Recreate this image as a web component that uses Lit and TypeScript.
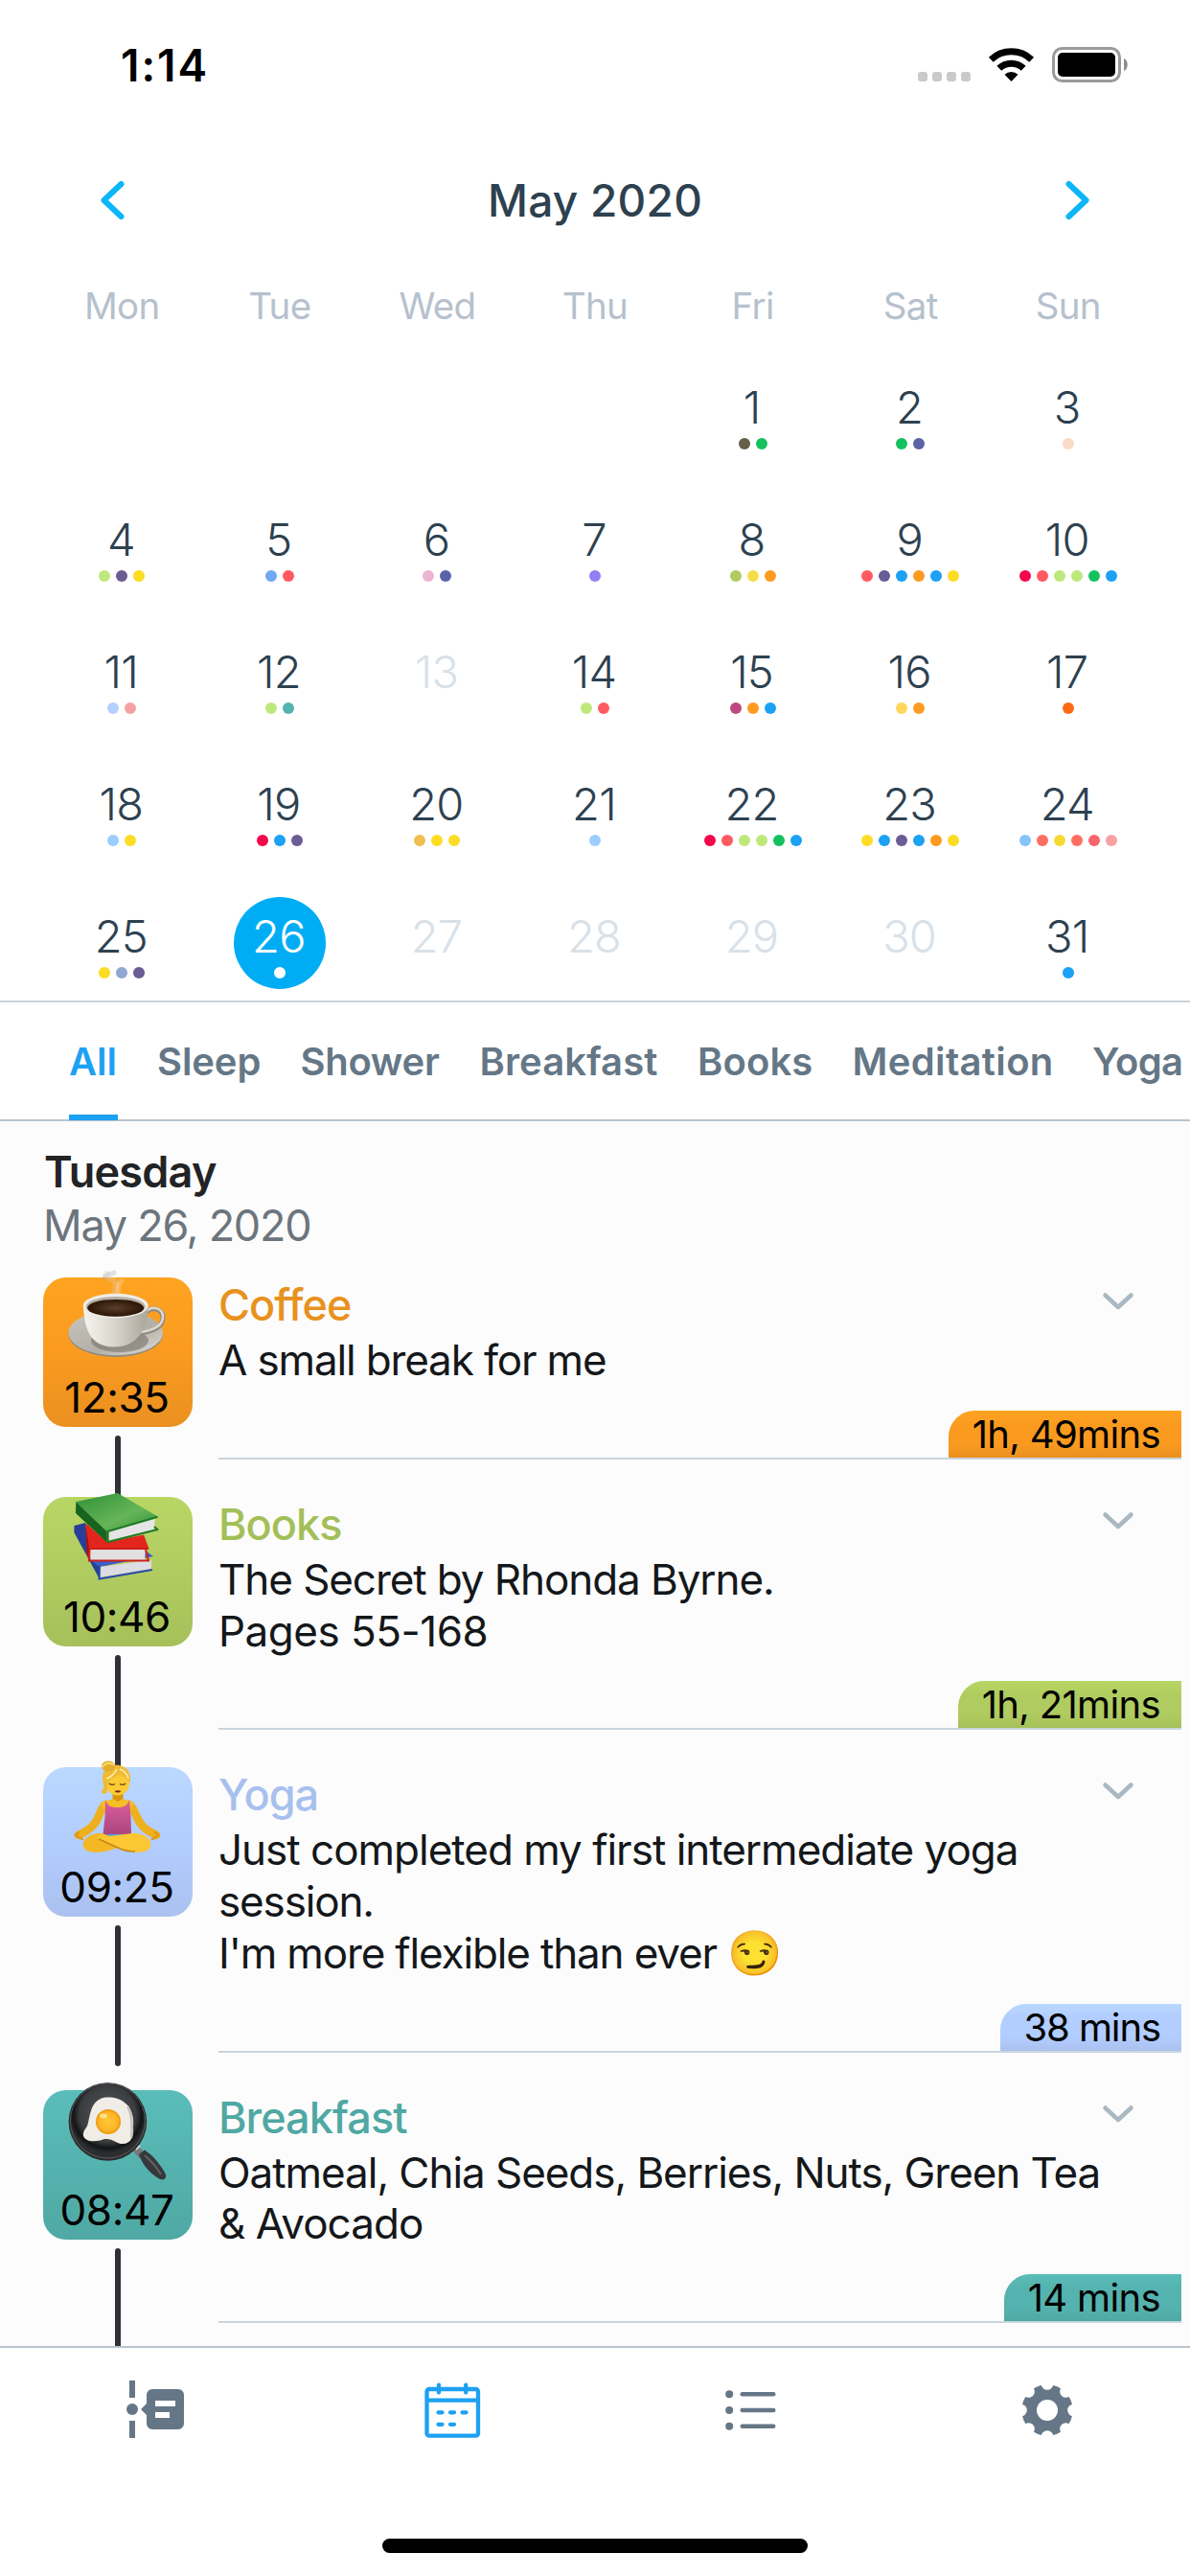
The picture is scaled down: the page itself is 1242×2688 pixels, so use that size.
import { LitElement, html, svg, css } from "lit";
import { customElement } from "lit/decorators.js";
import { classMap } from "lit/directives/class-map.js";
import { styleMap } from "lit/directives/style-map.js";

const C = {
  green: "#14c15f", lime: "#bfe87c", olive: "#65604a", indigo: "#5a62a8", purple: "#6a5c94",
  yellow: "#fcdc24", blue: "#1ca1f3", red: "#ff5a62", crimson: "#f6064a", orange: "#fc9b20",
  sky: "#9bceff", coral: "#ff6f61", rose: "#f8a1a4",
};

interface Day { n: number; dots: string[]; off?: boolean; on?: boolean }

const days: Day[] = [
  { n: 1, dots: [C.olive, C.green] },
  { n: 2, dots: [C.green, C.indigo] },
  { n: 3, dots: ["#f8dac6"] },
  { n: 4, dots: [C.lime, C.purple, C.yellow] },
  { n: 5, dots: ["#70a8f6", C.red] },
  { n: 6, dots: ["#ecb4d0", C.indigo] },
  { n: 7, dots: ["#9080f4"] },
  { n: 8, dots: ["#b0cb5e", "#f4df4b", C.orange] },
  { n: 9, dots: [C.red, C.purple, C.blue, C.orange, C.blue, C.yellow] },
  { n: 10, dots: [C.crimson, C.red, C.lime, C.lime, C.green, C.blue] },
  { n: 11, dots: ["#b3d0ff", C.rose] },
  { n: 12, dots: [C.lime, "#55b3ae"] },
  { n: 13, dots: [], off: true },
  { n: 14, dots: [C.lime, C.red] },
  { n: 15, dots: ["#c0487f", C.orange, C.blue] },
  { n: 16, dots: ["#ffd65c", C.orange] },
  { n: 17, dots: ["#fd6a17"] },
  { n: 18, dots: [C.sky, C.yellow] },
  { n: 19, dots: [C.crimson, C.blue, C.purple] },
  { n: 20, dots: ["#efc050", C.yellow, C.yellow] },
  { n: 21, dots: [C.sky] },
  { n: 22, dots: [C.crimson, C.red, C.lime, C.lime, C.green, C.blue] },
  { n: 23, dots: [C.yellow, C.blue, C.purple, C.blue, C.orange, C.yellow] },
  { n: 24, dots: ["#84c4fb", C.coral, "#f8da35", C.coral, "#f9656c", C.rose] },
  { n: 25, dots: [C.yellow, "#8fa8d4", C.purple] },
  { n: 26, dots: ["#ffffff"], on: true },
  { n: 27, dots: [], off: true },
  { n: 28, dots: [], off: true },
  { n: 29, dots: [], off: true },
  { n: 30, dots: [], off: true },
  { n: 31, dots: [C.blue] },
];

const tabs: [string, number][] = [
  ["All", 0], ["Sleep", -0.1], ["Shower", -0.3], ["Breakfast", 0.1],
  ["Books", 0.1], ["Meditation", 0.35], ["Yoga", -0.65],
];

const coffee = svg`
  <defs>
    <linearGradient id="cup" x1="0" x2="1"><stop offset="0" stop-color="#f6f4ef"/><stop offset=".45" stop-color="#dcd8d0"/><stop offset="1" stop-color="#aaa59a"/></linearGradient>
    <linearGradient id="saucer" x1="0" x2="1" y2="1"><stop offset="0" stop-color="#c9c6c0"/><stop offset=".6" stop-color="#b3afa6"/><stop offset="1" stop-color="#e2e0da"/></linearGradient>
    <radialGradient id="brew"><stop offset="0" stop-color="#5a3f2c"/><stop offset="1" stop-color="#2b1505"/></radialGradient>
  </defs>
  <g fill="none" stroke-linecap="round">
    <path d="M77 24C69 15 83 9 72 2C68 -1 63 -1 66 -4" stroke="#d9d4cb" stroke-width="6" opacity=".3"/>
    <path d="M77 24C82 15 74 10 82 4" stroke="#fff" stroke-width="5" opacity=".22"/>
    <path d="M64 0C68 -5 70 -3 74 -5" stroke="#999" stroke-width="5" opacity=".28"/>
  </g>
  <ellipse cx="75.700" cy="59.500" rx="49.300" ry="23.500" fill="#8f8b82"/>
  <ellipse cx="75.700" cy="57.800" rx="49.300" ry="23.500" fill="url(#saucer)"/>
  <ellipse cx="80" cy="66" rx="30" ry="12" fill="#75716a" opacity=".6"/>
  <path d="M108 36C114 30 125 33 125 42C125 51 115 56 102 58" fill="none" stroke="#8f8a81" stroke-width="5"/>
  <path d="M108 35C114 29 125 32 125 41C125 50 115 55 102 57" fill="none" stroke="#dedad2" stroke-width="2.600"/>
  <path d="M42 30C43 50 47 72 73 72.500C100 73 109 52 109.500 30Z" fill="url(#cup)"/>
  <ellipse cx="75.700" cy="29.500" rx="34" ry="12.800" fill="#efede8"/>
  <ellipse cx="75.700" cy="30.500" rx="31" ry="10.500" fill="#b7afa3"/>
  <ellipse cx="75.700" cy="31.800" rx="29.500" ry="8.900" fill="url(#brew)"/>`;

const books = svg`
  <defs><linearGradient id="leaf" x1="0" x2="1" y2="1"><stop offset="0" stop-color="#2f9136"/><stop offset=".6" stop-color="#66b558"/><stop offset="1" stop-color="#2f8f38"/></linearGradient></defs>
  <path d="M32.500 30L44 27L48 60L59 72L59 86L32.300 37Z" fill="#26409a"/>
  <path d="M48 65L108 57L115 62L59 73Z" fill="#3d5fc4"/>
  <path d="M60 73L113 65.500V75L60 84Z" fill="#dcdce2"/>
  <path d="M59 72L58.500 85.500L114 76" fill="none" stroke="#2b4bab" stroke-width="2"/>
  <path d="M44.300 27.300L66.700 47L105 39.500L110.500 54H48V66L45.500 60Z" fill="#e3261d"/>
  <path d="M44.300 27.300L48 53V66L45.500 58Z" fill="#9e1512"/>
  <path d="M48.500 54H107L106 66.300H49.500Z" fill="#e2dfe0"/>
  <path d="M110 54H48.500L48 66.500H110L107 55" fill="none" stroke="#cf1f19" stroke-width="2"/>
  <path d="M34.300 5L66.700 36V47.500L34 17Z" fill="#17631f"/>
  <path d="M34.300 5L77.700 -4L120 20.700L66.700 36Z" fill="url(#leaf)"/>
  <path d="M69 36L117 23L115.500 34L69 45.500Z" fill="#e6e5e6"/>
  <path d="M119.500 20.700L67.500 36V47L119.500 34L116 31" fill="none" stroke="#1f7a2a" stroke-width="2" stroke-linejoin="round"/>`;

const yoga = svg`
  <defs><linearGradient id="top" y2="1" x2="0"><stop offset="0" stop-color="#dc5f9d"/><stop offset="1" stop-color="#a8437e"/></linearGradient></defs>
  <g fill="none" stroke-linecap="round" stroke-linejoin="round">
    <path d="M65 39C57 46 60 57 46 66L37 71" stroke="#eeb01c" stroke-width="8.500"/>
    <path d="M90 39C98 46 96 57 109 66L118 71" stroke="#eeb01c" stroke-width="8.500"/>
    <path d="M41 75L33.500 71L37 68M114 75L120.500 71L117 68" stroke="#e09a16" stroke-width="2.500"/>
  </g>
  <path d="M72.500 24H83.500V37H72.500Z" fill="#d99513"/>
  <path d="M60 38C63 34 70 35 73 33L78 36L83 33C88 35 92 34 95 38L89 48H66Z" fill="#f5bd26"/>
  <path d="M65 34C67 40 70 42 77.500 42C85 42 88 40 90 34L91.500 52L92 70C82 73 72 73 62.500 70L64.500 52Z" fill="url(#top)"/>
  <path d="M67 70H89L85 76H71Z" fill="#49a7df"/>
  <path d="M62 69C50 68 40 75 42 83C45 91 62 90 75 85L100 74C97 69 92 69 88 71L77 76Z" fill="#f3b824"/>
  <path d="M93 69C105 68 114 75 112 83C109 91 92 90 79 85L56 74C60 69 65 70 69 72Z" fill="#fbc733"/>
  <path d="M58 75L79 84.500C84 87 90 88 96 88" fill="none" stroke="#c98612" stroke-width="1.500"/>
  <ellipse cx="77.700" cy="16.500" rx="12.300" ry="13" fill="#fbca35"/>
  <path d="M60.500 26C66 20 61 15 62 9C64 0 71 -3 79 -2C88 -1 93 7 90.500 17C89 11 83 9 78 7.500C75 12 69 12 68 16C67 20 68 25 66 27C65 28.500 62 28 60.500 26Z" fill="#eebb38"/>
  <path d="M66 12C73 10 75 5 77 2M80 2C85 4 88 8 89 12" fill="none" stroke="#fff0a0" stroke-width="1.500"/>
  <ellipse cx="68" cy="-1" rx="7" ry="5.500" fill="#e5ad2c"/>
  <path d="M62 0C65 -5 71 -5 74 -2" fill="none" stroke="#f9da70" stroke-width="2"/>
  <path d="M69 17Q72 19.500 75 17.500M80 17.500Q83 19.500 86 17" fill="none" stroke="#6b4510" stroke-width="1.400"/>
  <path d="M74.500 25.200Q78 23.300 81.500 25.200Q78 28 74.500 25.200Z" fill="#6e2a1a"/>`;

const pan = svg`
  <defs>
    <radialGradient id="iron" cy=".4"><stop offset="0" stop-color="#55585b"/><stop offset=".72" stop-color="#3a3c3f"/><stop offset=".88" stop-color="#131415"/><stop offset="1" stop-color="#2c2d2f"/></radialGradient>
    <radialGradient id="yolk"><stop offset="0" stop-color="#ffc73a"/><stop offset=".75" stop-color="#fdb524"/><stop offset="1" stop-color="#ee9408"/></radialGradient>
  </defs>
  <path d="M94 58L104 69" stroke="#77797c" stroke-width="8"/>
  <path d="M97 62L101 58" stroke="#d5d7d9" stroke-width="2"/>
  <path d="M100 67L106 62.500C116 69 124 80 128 88C129 93 125 95 120.500 92C113 88 104 79 100 67Z" fill="#37383b"/>
  <path d="M106 68C113 74 119 81 123 88" fill="none" stroke="#626467" stroke-width="1.800"/>
  <circle cx="67.400" cy="33" r="40.800" fill="url(#iron)"/>
  <circle cx="67.400" cy="32" r="39" fill="none" stroke="#5b5d60" stroke-width="1"/>
  <path d="M60 9C67 6 80 8 85 13C92 18 95 28 94 38C95 48 92 56 83 56C76 56 73 50 64 51C56 54 45 55 42 48C41 42 46 40 47 34C49 26 50 13 60 9Z" fill="#efede6"/>
  <path d="M88 17C94 27 93 40 92 50" fill="none" stroke="#c8c5bc" stroke-width="2.500"/>
  <circle cx="68" cy="33" r="13" fill="url(#yolk)"/>
  <ellipse cx="63" cy="27" rx="4" ry="2.500" fill="#ffe08a"/>`;

interface Line { text: string; track: number; emoji?: string }
interface Entry {
  kind: string; title: string; time: string; lines: Line[]; span: string;
  spanTrack: number; rail: number; art: unknown;
}

const entries: Entry[] = [
  {
    kind: "coffee", title: "Coffee", time: "12:35", span: "1h, 49mins", spanTrack: -0.65, rail: 70, art: coffee,
    lines: [{ text: "A small break for me", track: -1.15 }],
  },
  {
    kind: "books", title: "Books", time: "10:46", span: "1h, 21mins", spanTrack: -0.65, rail: 122, art: books,
    lines: [{ text: "The Secret by Rhonda Byrne.", track: -1.08 }, { text: "Pages 55-168", track: -0.5 }],
  },
  {
    kind: "yoga", title: "Yoga", time: "09:25", span: "38 mins", spanTrack: -1.1, rail: 147, art: yoga,
    lines: [
      { text: "Just completed my first intermediate yoga", track: -1.01 },
      { text: "session.", track: -1.15 },
      { text: "I'm more flexible than ever ", track: -1.15, emoji: "😏" },
    ],
  },
  {
    kind: "breakfast", title: "Breakfast", time: "08:47", span: "14 mins", spanTrack: -0.65, rail: 140, art: pan,
    lines: [{ text: "Oatmeal, Chia Seeds, Berries, Nuts, Green Tea", track: -1.05 }, { text: "& Avocado", track: -0.95 }],
  },
];

@customElement("app-root")
export class AppRoot extends LitElement {
  static styles = css`
    :host { display: block; width: 1242px; height: 2688px; overflow: hidden; background: #fff; font-family: Inter, "Noto Color Emoji", sans-serif; color: #14171a; }
    * { box-sizing: border-box; }
    svg { display: block; flex: none; overflow: visible; }
    .status { display: flex; justify-content: space-between; align-items: flex-start; height: 137px; padding: 0 62px 0 126px; }
    .clock { font-size: 46px; font-weight: 600; line-height: 137px; letter-spacing: 2px; color: #000; }
    .signals { margin-top: 40px; }
    .month { display: flex; justify-content: space-between; align-items: center; height: 144px; padding: 0 104px; }
    .month-name { font-size: 46px; font-weight: 460; letter-spacing: 0.250px; color: #2d4150; }
    .arrow { fill: none; stroke: #0cb6f8; stroke-width: 6; stroke-linecap: round; stroke-linejoin: round; }
    .week, .days { display: grid; grid-template-columns: repeat(7, 1fr); padding: 0 45px; }
    .week { font-size: 38.500px; line-height: 76px; letter-spacing: -0.700px; text-align: center; color: #b6c1cd; }
    .days { padding-top: 27px; padding-bottom: 12px; row-gap: 42px; justify-items: center; }
    .day { width: 96px; height: 96px; border-radius: 50%; color: #2d4150; }
    .first { grid-column-start: 5; }
    .num { height: 73px; line-height: 81px; padding-right: 2px; font-size: 47px; font-weight: 300; letter-spacing: -0.800px; text-align: center; }
    .off { color: #d9e1e8; }
    .on { background: #00adf5; color: #fff; }
    .dots { display: flex; justify-content: center; gap: 6px; }
    .dot { flex: none; width: 12px; height: 12px; border-radius: 50%; }
    .tabs { display: grid; grid-template-columns: 92px 149.500px 187px 227.500px 161.500px 250.500px 100px; justify-items: start; height: 126px; padding-left: 72px; border-top: 2px solid #c9d3dd; border-bottom: 2px solid #b9c4cf; }
    .tab { height: 123px; line-height: 123px; font-size: 40px; font-weight: 600; color: #657786; }
    .current { width: 51px; color: #1da1f2; border-bottom: 6px solid #1da1f2; }
    .feed { height: 1278px; padding: 24.600px 9px 0 45px; overflow: hidden; background: #fcfcfc; }
    .weekday { padding-left: 1px; font-size: 45px; line-height: 56px; font-weight: 600; letter-spacing: -0.750px; color: #222325; }
    .date { font-size: 45px; line-height: 56px; letter-spacing: -1.250px; color: #6c757d; margin-bottom: 26.400px; }
    .list { display: flex; flex-direction: column; gap: 39px; }
    .entry { display: flex; gap: 27px; flex: none; }
    .side { display: flex; flex-direction: column; align-items: center; gap: 9px; width: 156px; flex: none; }
    .tile { flex: none; width: 156px; height: 156px; border-radius: 24px; background: linear-gradient(var(--hi), var(--mid) 50%, var(--lo)); }
    .time { padding-right: 2px; font-size: 44px; line-height: 57px; letter-spacing: -0.400px; text-align: center; color: #000; }
    .rail { flex: none; width: 6px; border-radius: 3px; background: #2e3236; }
    .body { display: flex; flex-direction: column; flex: 1; border-bottom: 2px solid #c9d5e0; }
    .head { display: flex; justify-content: space-between; align-items: flex-start; height: 60px; padding-right: 50px; }
    .title { font-size: 45px; line-height: 57px; font-weight: 500; letter-spacing: -0.950px; color: var(--ink); }
    .more { margin-top: 16px; fill: none; stroke: #aab8c2; stroke-width: 4.500; stroke-linecap: round; stroke-linejoin: round; }
    .note { font-size: 44px; line-height: 53.700px; height: 53.700px; white-space: pre; }
    .emoji { font-size: 46px; line-height: 40px; }
    .span { align-self: flex-end; margin-top: auto; height: 49px; line-height: 49px; padding: 0 22px 0 25px; border-top-left-radius: 27px; font-size: 40px; color: #000; background: linear-gradient(var(--hi), var(--mid) 30%, var(--mid) 70%, var(--lo)); }
    .coffee { --hi: #ffa321; --mid: #fa9b20; --lo: #ea9020; --ink: #e8921e; }
    .books { --hi: #b8d664; --mid: #b0cc60; --lo: #a6c05a; --ink: #a3bf58; }
    .yoga { --hi: #bbd8ff; --mid: #b2cdff; --lo: #abc1ef; --ink: #a7c0ee; }
    .breakfast { --hi: #5abdb9; --mid: #55b3af; --lo: #4fa8a3; --ink: #4fa8a3; }
    .bar { display: grid; grid-template-columns: repeat(4, 310.300px); justify-items: center; height: 201px; border-top: 2px solid #b9c4cf; padding: 34px 0 0 7px; color: #657786; }
    .bar svg { fill: currentColor; }
    .bar .outline { fill: none; }
    .active { color: #1da1f2; }
    .home { width: 444px; height: 15px; margin: 0 auto; border-radius: 8px; background: #000; }
  `;

  private day(d: Day) {
    return html`<div class=${classMap({ day: true, off: !!d.off, on: !!d.on, first: d.n === 1 })}>
      <div class="num">${d.n}</div>
      <div class="dots">${d.dots.map((c) => html`<i class="dot" style=${styleMap({ background: c })}></i>`)}</div>
    </div>`;
  }

  private entry(e: Entry) {
    const height = 189.9 + 53.7 * (e.lines.length - 1);
    return html`<article class="entry ${e.kind}" style=${styleMap({ height: `${height}px` })}>
      <div class="side">
        <div class="tile">
          <svg width="156" height="97" viewBox="0 0 156 97">${e.art}</svg>
          <div class="time">${e.time}</div>
        </div>
        <div class="rail" style=${styleMap({ height: `${e.rail}px` })}></div>
      </div>
      <div class="body">
        <div class="head">
          <div class="title">${e.title}</div>
          <svg class="more" width="32" height="18" viewBox="0 0 32 18"><path d="M2.500 2.500L16 15L29.500 2.500"/></svg>
        </div>
        ${e.lines.map((l) => html`<div class="note" style=${styleMap({ letterSpacing: `${l.track}px` })}>${l.text}${l.emoji ? html`<span class="emoji">${l.emoji}</span>` : ""}</div>`)}
        <div class="span" style=${styleMap({ letterSpacing: `${e.spanTrack}px` })}>${e.span}</div>
      </div>
    </article>`;
  }

  render() {
    return html`
      <header class="status">
        <div class="clock">1:14</div>
        <svg class="signals" width="230" height="60" viewBox="950 40 230 60">
          <g fill="#c9caca">${[958, 973, 988, 1003].map((x) => svg`<rect x=${x} y="75" width="10" height="10" rx="3"/>`)}</g>
          <path d="M1055.500 85L1048.500 77.800A10 10 0 0 1 1062.500 77.800Z"/>
          <g fill="none" stroke="#000" stroke-width="7">
            <path d="M1042.800 71.200A18.500 18.500 0 0 1 1068.200 71.200"/>
            <path d="M1034.300 62.200A31 31 0 0 1 1076.700 62.200"/>
          </g>
          <rect x="1099.500" y="50.500" width="69" height="34" rx="9" fill="none" stroke="#9a9a9a" stroke-width="3"/>
          <rect x="1104" y="55" width="60" height="25" rx="5"/>
          <path d="M1173 61C1178 63 1178 72 1173 74Z" fill="#8d8d8d"/>
        </svg>
      </header>
      <div class="month">
        <svg class="arrow" width="28" height="42" viewBox="104 188 28 42"><path d="M126.500 192L108.500 209L126.500 226"/></svg>
        <div class="month-name">May 2020</div>
        <svg class="arrow" width="28" height="42" viewBox="1110 188 28 42"><path d="M1115.500 192L1133.500 209L1115.500 226"/></svg>
      </div>
      <div class="week">${["Mon", "Tue", "Wed", "Thu", "Fri", "Sat", "Sun"].map((d) => html`<div>${d}</div>`)}</div>
      <div class="days">${days.map((d) => this.day(d))}</div>
      <nav class="tabs">${tabs.map(([t, ls], i) => html`<div class=${classMap({ tab: true, current: i === 0 })} style=${styleMap({ letterSpacing: `${ls}px` })}>${t}</div>`)}</nav>
      <main class="feed">
        <div class="weekday">Tuesday</div>
        <div class="date">May 26, 2020</div>
        <div class="list">${entries.map((e) => this.entry(e))}</div>
      </main>
      <nav class="bar">
        <svg width="60" height="60" viewBox="132 2484 60 60">
          <path d="M135 2484h6v18h-6zM135 2526h6v18h-6z"/>
          <circle cx="138" cy="2514" r="6"/>
          <path fill-rule="evenodd" d="M159 2493H186A6 6 0 0 1 192 2499V2529A6 6 0 0 1 186 2535H159A6 6 0 0 1 153 2529V2520L147 2514L153 2508V2499A6 6 0 0 1 159 2493ZM162 2505V2511H183V2505ZM162 2517V2523H177V2517Z"/>
        </svg>
        <svg class="active outline" width="60" height="60" viewBox="442 2484 60 60">
          <g stroke="currentColor" stroke-width="4.300" stroke-linecap="round">
            <rect x="445.500" y="2493" width="53.500" height="48.700" rx="2.500"/>
            <path d="M446 2504.700H499M458 2488.700V2496.500M486.200 2488.700V2496.500"/>
            <path d="M457.500 2517.300H461.500M470 2517.300H474M482.500 2517.300H486.500M457.500 2529.800H461.500M470 2529.800H474"/>
          </g>
        </svg>
        <svg width="60" height="60" viewBox="752.500 2484 60 60">
          ${[2498.3, 2515, 2531.7].map((y) => svg`<circle cx="760.700" cy=${y} r="4"/><rect x="772" y=${y - 2.2} width="37" height="4.400" rx="2.200"/>`)}
        </svg>
        <svg width="60" height="60" viewBox="1063 2484 60 60">
          <mask id="teeth" maskUnits="userSpaceOnUse" x="1063" y="2484" width="60" height="62">
            <circle cx="1093" cy="2515" r="26.700" fill="#fff"/>
            <circle cx="1093" cy="2515" r="11" fill="#000"/>
            ${[0, 45, 90, 135, 180, 225, 270, 315].map((a) => svg`<circle cx="1093" cy="2487.500" r="6.300" fill="#000" transform="rotate(${a} 1093 2515)"/>`)}
          </mask>
          <rect x="1063" y="2484" width="60" height="62" mask="url(#teeth)"/>
        </svg>
      </nav>
      <div class="home"></div>
    `;
  }
}
